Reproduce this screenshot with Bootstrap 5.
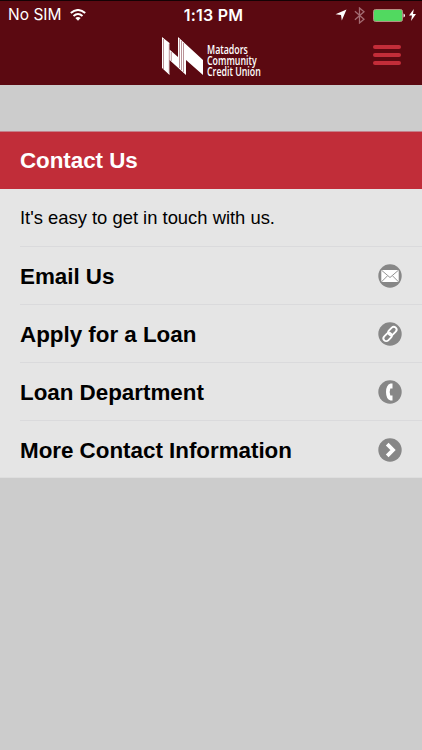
<!DOCTYPE html>
<html lang="en">
<head>
<meta charset="utf-8">
<meta name="viewport" content="width=device-width, initial-scale=1">
<title>Contact Us</title>
<link href="https://cdn.jsdelivr.net/npm/bootstrap@5.3.0/dist/css/bootstrap.min.css" rel="stylesheet">
<style>
body{background:#ccc;font-family:"Liberation Sans",Arial,sans-serif;color:#000;min-height:750px;overflow:hidden}
svg{display:block;flex:none}
.app-head{background:#5b0911;height:85px;border-top:1px solid #140204;color:#fff}
.status{height:28px;padding:0 6px 0 8px;font-family:Inter,sans-serif;line-height:28px}
.carrier{font-size:15.5px;letter-spacing:.02px}
.clock{font-size:16px;font-weight:600;letter-spacing:.25px;padding-left:3px}
.brand-row{height:56px;padding:8px 21px 0 161px}
.brand-name{font-family:"Open Sans",sans-serif;font-weight:600;font-size:12px;line-height:11px;margin:7px 0 0 4px;transform:scaleX(.735);transform-origin:0 0;white-space:nowrap;width:56px}
.menu-btn{width:28px;gap:4px;margin-top:8px}
.menu-btn span{height:4px;border-radius:2px;background:#c22d39}
.bt{margin-left:7px}
.battery{margin-left:8px}
.bolt{margin-left:4px}
.contact-list{margin-top:46px;border-top:1px solid #c4808a}
.heading-row{background:#c12d39;color:#fff;height:57px;padding:2px 20px 0;font-size:22.4px;letter-spacing:-.05px}
.rows{background:#e5e5e5;height:289px;border-bottom:1px solid #dedede}
.rows>*{height:58px;margin-left:20px;padding-right:20px;border-bottom:1px solid #dadadc}
.rows>:last-child{border-bottom:0}
.rows>a{font-size:22.4px;font-weight:700;letter-spacing:-.02px}
.rows>a>span{padding-top:2px}
.intro{font-size:18.4px;padding-top:1px}
</style>
<script src="https://cdn.jsdelivr.net/npm/bootstrap@5.3.0/dist/js/bootstrap.bundle.min.js"></script>
</head>
<body>
<header class="app-head">
  <div class="status row g-0">
    <div class="col d-flex align-items-center"><span class="carrier">No SIM</span>
      <svg class="ms-2" width="16" height="12" viewBox="0 0 16 12" fill="none" stroke="#fff" stroke-width="2"><path d="M.8 4.100Q8-2.100 15.200 4.100M3.500 7Q8 3 12.500 7"/><path d="M8 11.800 5.300 9Q8 6.800 10.700 9Z" fill="#fff" stroke="none"/></svg>
    </div>
    <div class="col-auto clock">1:13 PM</div>
    <div class="col d-flex align-items-center justify-content-end">
      <svg width="12" height="12" viewBox="0 0 12 12"><path d="M11.500.5 6.800 11.500 6 6 .5 5.300Z" fill="#fff"/></svg>
      <svg class="bt" width="11" height="17" viewBox="0 0 11 17" fill="none" stroke="#a36b72" stroke-width="1.300"><path d="M.9 4.300 10 12.300 5.500 16V1L10 4.700.9 12.700"/></svg>
      <svg class="battery" width="32" height="13" viewBox="0 0 32 13"><rect x=".5" y=".5" width="29" height="12" rx="2" fill="#51d960" stroke="#b58e83"/><path d="M30.500 4.500Q32 5 32 6.500T30.500 8.500Z" fill="#fff"/></svg>
      <svg class="bolt" width="7" height="12" viewBox="0 0 7 12"><path d="M4.800 0 0 6.500H3L2 12 7 5H4Z" fill="#fff"/></svg>
    </div>
  </div>
  <div class="brand-row d-flex align-items-start">
    <svg width="42" height="39" viewBox="0 0 42 39"><path d="M1 0 8.500 6V12.500L17 20V0L42 23V38L25 23V38L8.500 23V38L1 31Z" fill="#fff"/><path d="M2.500 2V32M8.300 7V36M10.300 15V24M18.500 2V31M20.500 4V33M22.500 6V35" fill="none" stroke="#8b4a52" stroke-width=".6"/></svg>
    <div class="brand-name">Matadors<br>Community<br>Credit Union</div>
    <div class="menu-btn d-flex flex-column ms-auto" role="button" aria-label="Menu"><span></span><span></span><span></span></div>
  </div>
</header>
<main class="contact-list">
  <h1 class="heading-row d-flex align-items-center m-0 fw-bold">Contact Us</h1>
  <div class="rows">
    <div class="intro d-flex align-items-center">It's easy to get in touch with us.</div>
    <a class="d-flex align-items-center justify-content-between text-black text-decoration-none"><span>Email Us</span>
      <svg width="24" height="24" viewBox="0 0 24 24"><circle cx="12" cy="12" r="11.700" fill="#878787"/><path d="M3.300 6h17.400v12H3.300Z" fill="#fff"/><path d="m3.300 6 8.700 7.500L20.700 6M3.300 18l6-6m11.400 6-6-6" fill="none" stroke="#878787" stroke-width=".9"/></svg></a>
    <a class="d-flex align-items-center justify-content-between text-black text-decoration-none"><span>Apply for a Loan</span>
      <svg width="24" height="24" viewBox="0 0 24 24"><circle cx="12" cy="12" r="11.700" fill="#878787"/><g fill="none" stroke="#fff" stroke-width="1.900"><rect x="9.700" y="6.200" width="9.400" height="5.600" rx="2.800" transform="rotate(-45 14.400 9)"/><rect x="4.900" y="12.200" width="9.400" height="5.600" rx="2.800" transform="rotate(-45 9.600 15)"/></g></svg></a>
    <a class="d-flex align-items-center justify-content-between text-black text-decoration-none"><span>Loan Department</span>
      <svg width="24" height="24" viewBox="0 0 24 24"><circle cx="12" cy="12" r="11.700" fill="#878787"/><path d="M14.500 3.500H12.500Q8 5 8 12t4.500 8.500h2V15.500H12.300Q11 12 12.300 8.500h2.200Z" fill="#fff"/></svg></a>
    <a class="d-flex align-items-center justify-content-between text-black text-decoration-none"><span>More Contact Information</span>
      <svg width="24" height="24" viewBox="0 0 24 24"><circle cx="12" cy="12" r="11.700" fill="#878787"/><path d="m9.200 6.200 5.800 5.800-5.800 5.800" fill="none" stroke="#fff" stroke-width="3.800"/></svg></a>
  </div>
</main>
</body>
</html>
